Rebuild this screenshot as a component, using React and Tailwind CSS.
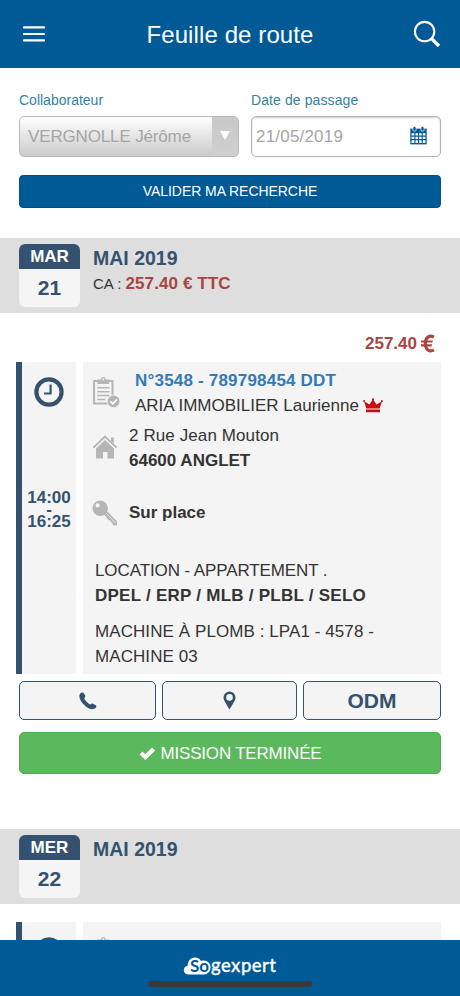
import React from 'react';

const days = [
  {
    name: 'MAR',
    number: '21',
    month: 'MAI 2019',
    total: '257.40 € TTC',
  },
  {
    name: 'MER',
    number: '22',
    month: 'MAI 2019',
    total: null,
  },
];

const ClockIcon = () => (
  <svg width="30" height="30" viewBox="0 0 30 30" fill="none" stroke="#34526f">
    <circle cx="15" cy="15" r="12.6" strokeWidth="4.2" />
    <path d="M16.6 7.5V16.5H10" strokeWidth="2.2" />
  </svg>
);

const ClipboardIcon = () => (
  <svg width="28" height="32" viewBox="0 0 28 32">
    <path d="M2 5H20.5V27.5H2Z" fill="none" stroke="#b5b5b5" strokeWidth="2" strokeLinejoin="round" />
    <path d="M5.4 3.5H9A2.4 2.4 0 0 1 13.8 3.5H17.2V8H5.4Z" fill="#b5b5b5" />
    <circle cx="11.4" cy="3.2" r="1" fill="#f4f4f4" />
    <path d="M5.2 11.8H17.4M5.2 15.7H17.4M5.2 19.6H17.4M5.2 23.5H13.4" stroke="#b5b5b5" strokeWidth="1.5" />
    <circle cx="21.6" cy="25.4" r="6.3" fill="#b5b5b5" stroke="#f4f4f4" strokeWidth="0.8" />
    <path d="M18.4 25.4L20.8 27.8L25 23.4" fill="none" stroke="#fff" strokeWidth="1.6" />
  </svg>
);

const HomeIcon = () => (
  <svg width="26" height="24" viewBox="0 0 26 24" fill="#b5b5b5">
    <path d="M1.5 12.6L13 1.6L24.5 12.6" fill="none" stroke="#b5b5b5" strokeWidth="1.9" />
    <path d="M19 2.5H21.8V8.6L19 6Z" />
    <path d="M13 5L22 13.5V23.5H15.5V17H11V23.5H4V13.5Z" />
  </svg>
);

const KeyIcon = () => (
  <svg width="27" height="27" viewBox="0 0 27 27">
    <path d="M11 13L14 10L25 21.4V25.5H21.6L20.5 24V22.6H18.6V20.6H16.8Z" fill="#b5b5b5" />
    <path d="M14 13L23.5 23" stroke="#e4e4e4" strokeWidth="1" />
    <circle cx="8.2" cy="8.2" r="7.7" fill="#b5b5b5" />
    <circle cx="5.6" cy="5.4" r="2.1" fill="#f4f4f4" />
  </svg>
);

const CrownIcon = () => (
  <svg width="20" height="15" viewBox="0 0 20 15" fill="#cb0c0c">
    <path d="M3.4 10.6L1 3.2L6.4 6.6L10 1.2L13.6 6.6L19 3.2L16.6 10.6Z" />
    <path d="M3 11.5H17V14.2H3Z" />
    <circle cx="1.1" cy="3.1" r="1" />
    <circle cx="10" cy="1.3" r="1.1" />
    <circle cx="18.9" cy="3.1" r="1" />
  </svg>
);

const CalendarIcon = () => (
  <svg width="17" height="19" viewBox="0 0 17 19">
    <path d="M0.3 2.6H16.7V18.4H0.3Z" fill="#045b98" />
    <rect x="2.9" y="0.5" width="3.2" height="4.8" rx="1.5" fill="#045b98" stroke="#fff" strokeWidth="0.7" />
    <rect x="10.9" y="0.5" width="3.2" height="4.8" rx="1.5" fill="#045b98" stroke="#fff" strokeWidth="0.7" />
    <path
      d="M1.6 7.2H4.3V9.5H1.6ZM5.5 7.2H8V9.5H5.5ZM9.1 7.2H11.6V9.5H9.1ZM12.8 7.2H15.4V9.5H12.8ZM1.6 10.7H4.3V13.1H1.6ZM5.5 10.7H8V13.1H5.5ZM9.1 10.7H11.6V13.1H9.1ZM12.8 10.7H15.4V13.1H12.8ZM1.6 14.3H4.3V17H1.6ZM5.5 14.3H8V17H5.5ZM9.1 14.3H11.6V17H9.1ZM12.8 14.3H15.4V17H12.8Z"
      fill="#fff"
    />
  </svg>
);

const PhoneIcon = () => (
  <svg width="18" height="18" viewBox="0 0 18 18" fill="#34526f">
    <path d="M1.2 1.6C2.2 0.6 3.8 0.2 4.6 1.1L6.2 3.6C6.7 4.6 6.2 5.4 5.3 6.1C5 7.6 9.8 12.5 11.6 12.6C12.4 11.6 13.1 11.2 14.1 11.7L16.7 13.2C17.7 13.9 17.4 15.2 16.5 16.1C14.6 17.8 11.2 17.7 7.5 15C4.4 12.7 1.7 9.6 0.7 6.3C0.2 4.4 0.3 2.6 1.2 1.6Z" />
  </svg>
);

const PinIcon = () => (
  <svg width="13" height="19" viewBox="0 0 13 19" fill="#34526f">
    <path
      fillRule="evenodd"
      d="M6.5 0.4A6 6 0 0 1 12.5 6.4C12.5 9.6 9.3 13.3 6.5 18.5C3.7 13.3 0.5 9.6 0.5 6.4A6 6 0 0 1 6.5 0.4ZM6.5 3.1A3.3 3.3 0 1 0 6.5 9.7A3.3 3.3 0 1 0 6.5 3.1Z"
    />
  </svg>
);

const EuroIcon = () => (
  <svg width="14" height="19" viewBox="0 0 14 19" fill="none" stroke="#a94442" strokeWidth="3.1">
    <path d="M13 3C8.4 0.6 4.4 3.4 4.3 9.5C4.4 15.6 8.4 18.4 13 16" />
    <path d="M0 7.5H11.6M0 11.4H10.8" strokeWidth="2.1" />
  </svg>
);

const Logo = () => (
  <svg width="96" height="24" viewBox="0 0 96 24">
    <path
      d="M7 20.5C3.6 20.5 1.8 18.6 1.8 16.2C1.8 13.6 3.6 12 5.6 11.8C5.8 6.6 8.8 3.5 12.8 3.5C15.8 3.5 18 4.8 18.9 7C24.4 5.2 28.6 8.8 28.6 13.3C28.6 17.8 25.4 20.5 21.8 20.5Z"
      fill="#fff"
    />
    <text x="8" y="18" fontSize="17" fontWeight="700" fill="#005a96" fontFamily="Lato, sans-serif">S</text>
    <text x="17.3" y="18" fontSize="17" fontWeight="700" fill="#005a96" fontFamily="Lato, sans-serif">o</text>
    <text x="29" y="18" fontSize="18.5" fill="#fff" fontWeight="500" textLength="65" fontFamily="Lato, sans-serif" stroke="#fff" strokeWidth="0.3">
      gexpert
    </text>
  </svg>
);

const DayBar = ({ day }) => (
  <div className="flex h-[75px] shrink-0 bg-[#dedede] px-[19px] pt-[6px]">
    <div className="h-[63px] w-[61px] overflow-hidden rounded-md bg-[#f5f5f5] text-center font-bold">
      <div className="h-[25px] bg-[#34526f] text-[17px] leading-[26px] text-white">{day.name}</div>
      <div className="text-[21px] leading-[38px] text-[#34526f]">{day.number}</div>
    </div>
    <div className="ml-[13px] pt-[2px]">
      <div className="text-[19.5px] font-bold leading-6 text-[#34526f]">{day.month}</div>
      {day.total && (
        <div className="pt-px text-[15px] leading-[26px] text-[#333]">
          CA : <span className="text-[17px] font-bold tracking-[0.1px] text-[#a94442]">{day.total}</span>
        </div>
      )}
    </div>
  </div>
);

const TimeColumn = ({ children }) => (
  <div className="flex w-[60px] shrink-0 flex-col items-center border-l-[6px] border-[#34526f] bg-[#f4f4f4] pt-[15px]">
    <ClockIcon />
    {children}
  </div>
);

export default function App() {
  return (
    <div className="flex h-[996px] w-[460px] flex-col overflow-hidden bg-white font-['Liberation_Sans',Arial,sans-serif] text-[17px] text-[#333]">
      <header className="flex h-[68px] shrink-0 items-center justify-between bg-[#005a96] pl-[23px] pr-[19px]">
        <svg width="22" height="18" viewBox="0 0 22 18" stroke="#fff" strokeWidth="2.2" strokeLinecap="round">
          <path d="M1 2.4H21M1 9H21M1 15.4H21" />
        </svg>
        <h1 className="pl-[2px] pt-px text-[24px] tracking-[0.1px] text-white">Feuille de route</h1>
        <svg width="28" height="28" viewBox="0 0 28 28" fill="none" stroke="#fff">
          <circle cx="11.6" cy="11.6" r="9.7" strokeWidth="2.1" />
          <path d="M18.6 18.6L26 26" strokeWidth="3.4" />
        </svg>
      </header>

      <main className="flex min-h-0 flex-1 flex-col overflow-hidden">
        {/* Search form */}
        <div className="shrink-0 px-[19px] pt-[22px]">
          <div className="flex gap-3">
            <div className="w-[220px]">
              <label className="block h-[26px] text-[14px] leading-5 text-[#31849f]">Collaborateur</label>
              <div className="flex h-[41px] overflow-hidden rounded-[5px] border border-[#b9b9b9] bg-linear-to-b from-white to-[#cbcbcb]">
                <span className="flex-1 pl-[8px] leading-[40px] tracking-[-0.15px] text-[#a5a5a5]">VERGNOLLE Jérôme</span>
                <span className="flex w-[26px] justify-center bg-linear-to-b from-[#c8c8c8] to-[#d0d0d0] pt-[14px]">
                  <svg width="10" height="9" viewBox="0 0 10 9" fill="#fff">
                    <path d="M0 0H10L5 9Z" />
                  </svg>
                </span>
              </div>
            </div>
            <div className="w-[190px]">
              <label className="block h-[26px] text-[14px] leading-5 tracking-[0.1px] text-[#31849f]">Date de passage</label>
              <div className="flex h-[41px] items-center justify-between rounded-[5px] border border-[#b5b5b5] pb-[2px] pl-[4px] pr-[13px] shadow-[inset_0_1px_2px_rgba(0,0,0,0.2)]">
                <span className="pt-[2px] tracking-[0.2px] text-[#a5a5a5]">21/05/2019</span>
                <CalendarIcon />
              </div>
            </div>
          </div>
          <button className="mt-[18px] block h-[33px] w-full rounded-[4px] border border-[#034f85] bg-[#005a96] text-[14px] leading-[31px] tracking-[-0.05px] text-white">
            VALIDER MA RECHERCHE
          </button>
        </div>

        <div className="mt-[30px] shrink-0">
          <DayBar day={days[0]} />
        </div>

        {/* Mission */}
        <div className="flex h-[49px] shrink-0 items-center justify-end gap-[4px] pr-[25px] pt-[12px] font-bold text-[#a94442]">
          257.40
          <EuroIcon />
        </div>
        <div className="flex h-[312px] shrink-0 gap-[7px] pl-[16px] pr-[19px]">
          <TimeColumn>
            <div className="mt-[79px] text-center font-bold text-[#34526f]">
              <div className="leading-[24px]">14:00</div>
              <div className="-my-[6px] h-[12px] leading-[12px]">-</div>
              <div className="leading-[24px]">16:25</div>
            </div>
          </TimeColumn>
          <div className="flex-1 bg-[#f4f4f4] pl-[9px] pt-[7px] leading-[24.5px]">
            <div className="flex">
              <div className="w-[43px] pt-[7px]">
                <ClipboardIcon />
              </div>
              <div>
                <div className="font-bold tracking-[0.2px] text-[#337ab7]">N°3548 - 789798454 DDT</div>
                <div className="flex items-center gap-[4px]">
                  ARIA IMMOBILIER Laurienne
                  <CrownIcon />
                </div>
              </div>
            </div>
            <div className="mt-[6px] flex">
              <div className="w-[37px] pt-[11px]">
                <HomeIcon />
              </div>
              <div>
                <div className="tracking-[0.1px]">2 Rue Jean Mouton</div>
                <div className="font-bold">64600 ANGLET</div>
              </div>
            </div>
            <div className="mt-[25px] flex h-[30px] items-center">
              <div className="w-[37px]">
                <KeyIcon />
              </div>
              <div className="font-bold">Sur place</div>
            </div>
            <div className="mt-[31px] pl-[3px]">
              <div className="tracking-[-0.1px]">LOCATION - APPARTEMENT .</div>
              <div className="font-bold tracking-[0.25px]">DPEL / ERP / MLB / PLBL / SELO</div>
              <div className="mt-[12px] w-[300px] tracking-[0.08px]">MACHINE À PLOMB : LPA1 - 4578 - MACHINE 03</div>
            </div>
          </div>
        </div>

        <div className="mt-[7px] grid shrink-0 grid-cols-[137px_135px_138px] gap-[6px] px-[19px]">
          <button className="flex h-[39px] items-center justify-center rounded-[5px] border border-[#34526f] bg-[#f4f4f4]">
            <PhoneIcon />
          </button>
          <button className="flex h-[39px] items-center justify-center rounded-[5px] border border-[#34526f] bg-[#f4f4f4]">
            <PinIcon />
          </button>
          <button className="flex h-[39px] items-center justify-center rounded-[5px] border border-[#34526f] bg-[#f4f4f4] text-[21px] font-bold text-[#34526f]">
            ODM
          </button>
        </div>
        <div className="mt-[12px] shrink-0 px-[19px]">
          <button className="flex h-[42px] w-full items-center justify-center gap-[5px] rounded-[5px] border border-[#4cae4c] bg-[#5cb85c] pt-px tracking-[-0.2px] text-white">
            <svg width="17" height="13" viewBox="0 0 17 13" fill="none" stroke="#fff" strokeWidth="4.2">
              <path d="M2 6L6.4 10L14.6 2" />
            </svg>
            MISSION TERMINÉE
          </button>
        </div>

        <div className="mt-[55px] shrink-0">
          <DayBar day={days[1]} />
        </div>
        <div className="mt-[18px] flex h-[60px] shrink-0 gap-[7px] pl-[16px] pr-[19px]">
          <TimeColumn />
          <div className="flex-1 bg-[#f4f4f4] pl-[9px] pt-[14px]">
            <ClipboardIcon />
          </div>
        </div>
      </main>

      <footer className="flex h-[56px] shrink-0 flex-col items-center bg-[#005a96] pt-[14px]">
        <Logo />
        <div className="mt-[3px] h-[6px] w-[164px] rounded-full bg-[#3a3a3c]"></div>
      </footer>
    </div>
  );
}
